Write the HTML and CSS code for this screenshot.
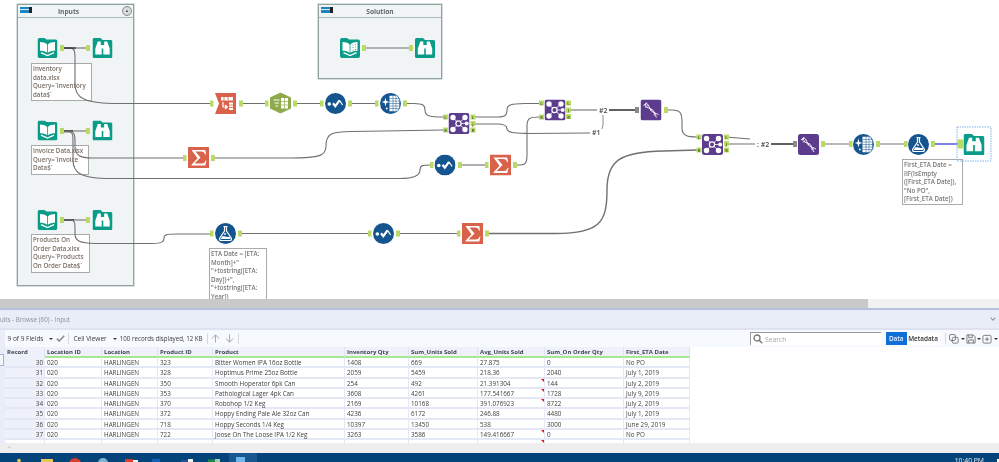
FILE: index.html
```html
<!DOCTYPE html>
<html lang="en">
<head>
<meta charset="utf-8">
<title>Alteryx workflow</title>
<link rel="stylesheet" href="styles.css">
</head>
<body>
<div class="app">
  <section class="canvas">
    <div class="box box-inputs">
      <div class="box-head"><span class="tag"></span><span class="box-title">Inputs</span><span class="collapse">&#9650;</span></div>
    </div>
    <div class="box box-solution">
      <div class="box-head"><span class="tag"></span><span class="box-title">Solution</span></div>
    </div>
    <div class="note-box n1">Inventory<br>data.xlsx<br>Query=`Inventory<br>data$`</div>
    <div class="note-box n2">Invoice Data.xlsx<br>Query=`Invoice<br>Data$`</div>
    <div class="note-box n3">Products On<br>Order Data.xlsx<br>Query=`Products<br>On Order Data$`</div>
    <div class="note-box n4">ETA Date = [ETA:<br>Month]+"<br>"+tostring([ETA:<br>Day])+",<br>"+tostring([ETA:<br>Year])</div>
    <div class="note-box n5">First_ETA Date =<br>IIF(IsEmpty<br>([First_ETA Date]),<br>"No PO",<br>[First_ETA Date])</div>

    <svg class="flow" viewBox="0 0 999 299" width="999" height="299" aria-hidden="true">
      <defs>
        <symbol id="input" viewBox="0 0 20 20">
          <path class="teal" d="M2 0H7L9 1.500H18a2 2 0 0 1 2 2V18a2 2 0 0 1-2 2H2a2 2 0 0 1-2-2V2a2 2 0 0 1 2-2Z"/>
          <path class="wht" d="M2.500 4C5 4 8 4.800 9.600 6.400V14.800C8 13.400 5 12.800 2.500 12.800ZM17.500 4C15 4 12 4.800 10.400 6.400V14.800C12 13.400 15 12.800 17.500 12.800Z"/>
          <path class="tl" d="M3.500 14.600 10 17.600 16.500 14.600"/>
        </symbol>
        <symbol id="input2" viewBox="0 0 20 20">
          <path class="teal" d="M2 0H7L9 1.500H18a2 2 0 0 1 2 2V18a2 2 0 0 1-2 2H2a2 2 0 0 1-2-2V2a2 2 0 0 1 2-2Z"/>
          <path class="wht" d="M2.500 4C5 4 8 4.800 9.600 6.400V14.800C8 13.400 5 12.800 2.500 12.800ZM17.500 4C15 4 12 4.800 10.400 6.400V14.800C12 13.400 15 12.800 17.500 12.800Z"/>
          <path class="tl2" d="M13 6.500V7.500M13 9V10M13 11.500V12.500M15.500 6V7M15.500 8.500V9.500M15.500 11V12"/>
          <path class="tl" d="M3.500 14.600 10 17.600 16.500 14.600"/>
        </symbol>
        <symbol id="browse" viewBox="0 0 20 20">
          <path class="teal" d="M1.500 0H8L10 2H18.500a1.500 1.500 0 0 1 1.500 1.500V18.500a1.500 1.500 0 0 1-1.500 1.500H1.500a1.500 1.500 0 0 1-1.500-1.500V1.500a1.500 1.500 0 0 1 1.500-1.500Z"/>
          <path class="wht" d="M5.300 3.500H8.300V6.500L9.200 9.500V16.500H2.800V10.500ZM14.700 3.500H11.700V6.500L10.800 9.500V16.500H17.200V10.500Z"/>
          <path class="wht" d="M8.300 7H11.700V10.500H8.300Z"/>
        </symbol>
        <symbol id="xtab" viewBox="0 0 21 21">
          <path class="red" d="M0 0H21V21H0L4 10.500Z"/>
          <path class="wht" d="M6 4H18V7.500H6Z"/>
          <path class="rd" d="M9 4V7.500M13 4V7.500"/>
          <path class="wl" d="M8 9V14H12M10 12 12.300 14 10 16"/>
          <path class="wht" d="M14 9.500H18V17H14Z"/>
          <path class="rd" d="M14 12H18M14 14.500H18"/>
        </symbol>
        <symbol id="hex" viewBox="0 0 22 21">
          <path class="olive" d="M11 0 21.500 5V16L11 21 .500 16V5Z"/>
          <path class="wl" d="M4 7.500H10M5 10.500H9.500M6 13.500H8.500"/>
          <path class="wht" d="M11.500 5.500H18.500V16H11.500Z"/>
          <path class="ol" d="M15 5.500V16M11.500 9H18.500M11.500 12.500H18.500"/>
        </symbol>
        <symbol id="select" viewBox="0 0 21 21">
          <circle class="blue" cx="10.500" cy="10.500" r="10.500"/>
          <circle class="wht" cx="4.300" cy="11" r="1.800"/>
          <path class="wl2" d="M8 10.300 10.300 13.200 14.500 7.300"/>
          <path class="wl" d="M14.500 7.300 17.600 12"/>
        </symbol>
        <symbol id="multi" viewBox="0 0 21 21">
          <circle class="blue" cx="10.500" cy="10.500" r="10.500"/>
          <path class="wht" d="M5.500 4.500 6.400 8.100 9.500 9 6.400 9.900 5.500 13.500 4.600 9.900 1.800 9 4.600 8.100Z"/>
          <path class="wht" d="M9.500 2.800H17L19.300 6.500V15L17 18.300H9.500Z"/>
          <path class="bl" d="M13 2.800V18.300M16 2.800V18.300M9.500 5.500H19M9.500 8H19.300M9.500 10.500H19.300M9.500 13H19.300M9.500 15.500H19"/>
          <circle class="wht" cx="6.800" cy="15.500" r=".9"/>
        </symbol>
        <symbol id="formula" viewBox="0 0 21 21">
          <circle class="blue" cx="10.500" cy="10.500" r="10.500"/>
          <path class="wl" d="M8.500 3.500H12.500M9.500 3.500V8L4.800 15C4 16.500 5 17.500 6.300 17.500H14.700C16 17.500 17 16.500 16.200 15L11.500 8V3.500"/>
          <path class="wht" d="M7 13.500C9 12.500 12 15 14.500 13.500L15.500 16H5.800Z"/>
          <circle class="wht" cx="10" cy="11" r=".9"/>
        </symbol>
        <symbol id="sum" viewBox="0 0 21 21">
          <path class="red" d="M0 0H21V21H0Z"/>
          <path class="wht" d="M3.500 3H17.300L18 7.500H17C16.500 5.500 15.500 4.500 13 4.500H7.500L12.500 10.500 6.500 16.500H14C16 16.500 17 15.500 17.600 13.500H18.500L17.300 18.500H3.500V17.800L9.500 11.300Z"/>
        </symbol>
        <symbol id="join" viewBox="0 0 21 21">
          <rect class="purple" width="21" height="21" rx="2.500"/>
          <path class="wt" d="M10 10.500 5 5M10 10.500 16 5M10 10.500 5 16M10 10.500 16 16M10 10.500H18"/>
          <circle class="pc" cx="10" cy="10.500" r="2.600"/>
          <circle class="wht" cx="4.500" cy="4.500" r="2.700"/>
          <circle class="wht" cx="16.500" cy="4.500" r="2.700"/>
          <circle class="wht" cx="4.500" cy="16.500" r="2.700"/>
          <circle class="wht" cx="16.500" cy="16.500" r="2.700"/>
          <circle class="wht" cx="18.200" cy="10.500" r="2"/>
        </symbol>
        <symbol id="dna" viewBox="0 0 21 21">
          <rect class="purple" width="21" height="21" rx="2.500"/>
          <path class="wd" d="M3 6Q7 2 8.500 7T13 13T18 15"/>
          <path class="wd" d="M6 3Q2.500 7 8 8.500T13.500 12.500T16 18"/>
          <path class="wr" d="M4.500 4.500 6 6M10 10 11 11.500M11.500 9.500 10 11M14.500 14.500 16 16M13 15.500 15.500 13.500M5 8.500 7.500 5.500"/>
        </symbol>
      </defs>

      <!-- wires -->
      <path class="wire" d="M64 48H70C75 48 75 52 75 60V84C75 98 85 103 112 103.500H210"/>
      <path class="wire dark" d="M64 48H76"/>
      <path class="wire" d="M76 48H86"/>
      <path class="wire" d="M64 131H86"/>
      <path class="wire dark" d="M64 131H73"/>
      <path class="wire" d="M64 131H70C74 131 75 134 75 140V147C75 155 80 158 92 158H183"/>
      <path class="wire" d="M64 132H69C73 132 73 135 73 142V160C73 172 80 178 105 178.500H400C416 178.500 420 175 420 170C420 165 423 165 430 165"/>
      <path class="wire" d="M64 220H86"/>
      <path class="wire dark" d="M64 220H74"/>
      <path class="wire" d="M64 220H70C75 220 75 223 75 228V234C75 241 80 243 95 243.500H152C163 243.500 164 241 164 238C164 234 168 234 178 234H210"/>
      <path class="wire" d="M243 103.500H265M297 103.500H320M351 103.500H375"/>
      <path class="wire" d="M405 103.500H414C424 103.500 425 106 425 110C425 116 429 117 443 117"/>
      <path class="wire" d="M213 158H290C322 158 326 155 326 146C326 133 332 132 352 131.500L443 130"/>
      <path class="wire" d="M460 165H485"/>
      <path class="wire" d="M515 165H520C527 165 527 160 527 154V126C527 118 530 117 539 117"/>
      <path class="wire" d="M475 117H498C507 117 507 113 507 110C507 104 512 104 526 103.500H539"/>
      <path class="wire" d="M475 124H497C506 124 507 127 507 129C508 133 515 133 528 133.500L590 133"/>
      <path class="wire" d="M240 233.500H368M398 233.500H458"/>
      <path class="wire thick" d="M487 233.500H556C600 233.500 607 222 607 190C607 160 620 152 664 151L697 150"/>
      <path class="wire" d="M570 110H597"/>
      <path class="wire dark thick" d="M609 110H636"/>
      <path class="wire thin" d="M603 115V125L602 129"/>
      <path class="wire" d="M666 110H672C681 110 682 114 682 122V128C682 136 688 137 697 137"/>
      <path class="wire" d="M726 137 750 139M726 144H755"/>
      <path class="wire dark thick" d="M771 144H794"/>
      <path class="wire" d="M823 144H849M878 144H904"/>
      <path class="wire-sel" d="M933 144H958"/>
      <path class="wire" d="M366 48H411"/>
      <path class="wire thin" d="M362 48H366"/>

      <!-- tools -->
      <use href="#input" x="37.500" y="38" width="20" height="20"/>
      <use href="#browse" x="92.500" y="38" width="20" height="20"/>
      <use href="#input" x="37.500" y="120.500" width="20" height="20"/>
      <use href="#browse" x="92.500" y="120.500" width="20" height="20"/>
      <use href="#input" x="37.500" y="210" width="20" height="20"/>
      <use href="#browse" x="92.500" y="210" width="20" height="20"/>
      <use href="#input2" x="340" y="38" width="20" height="20"/>
      <use href="#browse" x="415" y="38" width="20" height="20"/>
      <use href="#xtab" x="215" y="93" width="21" height="21"/>
      <use href="#hex" x="269.500" y="92.500" width="22" height="21"/>
      <use href="#select" x="325" y="93" width="21" height="21"/>
      <use href="#multi" x="380" y="93" width="21" height="21"/>
      <use href="#join" x="448.500" y="113" width="21" height="21"/>
      <use href="#sum" x="188" y="147" width="21" height="21"/>
      <use href="#select" x="434.500" y="154.500" width="21" height="21"/>
      <use href="#sum" x="490" y="154.500" width="21" height="21"/>
      <use href="#formula" x="215" y="223" width="21" height="21"/>
      <use href="#select" x="373" y="223" width="21" height="21"/>
      <use href="#sum" x="462" y="223" width="21" height="21"/>
      <use href="#join" x="544.500" y="99.500" width="21" height="21"/>
      <use href="#dna" x="640.500" y="99.500" width="21" height="21"/>
      <use href="#join" x="702" y="134" width="21" height="21"/>
      <use href="#dna" x="798" y="134" width="21" height="21"/>
      <use href="#multi" x="853" y="134" width="21" height="21"/>
      <use href="#formula" x="908" y="134" width="21" height="21"/>
      <use href="#browse" x="963.500" y="134" width="21" height="21"/>
      <rect class="selbox" x="957" y="127" width="34" height="34"/>

      <!-- anchors -->
      <g class="anchors">
        <rect x="60" y="45" width="4" height="6"/><rect x="86" y="45" width="4" height="6"/>
        <rect x="60" y="128" width="4" height="6"/><rect x="86" y="128" width="4" height="6"/>
        <rect x="60" y="217" width="4" height="6"/><rect x="86" y="217" width="4" height="6"/>
        <rect x="362" y="45" width="4" height="6"/><rect x="409" y="45" width="4" height="6"/>
        <rect x="210" y="100.500" width="3.500" height="6"/><rect x="239" y="100.500" width="4" height="6"/>
        <rect x="265" y="100.500" width="3.500" height="6"/><rect x="293" y="100.500" width="4" height="6"/>
        <rect x="320" y="100.500" width="3.500" height="6"/><rect x="348" y="100.500" width="4" height="6"/>
        <rect x="375" y="100.500" width="3.500" height="6"/><rect x="403" y="100.500" width="4" height="6"/>
        <rect x="183" y="155" width="3.500" height="6"/><rect x="211" y="155" width="4" height="6"/>
        <rect x="430" y="162" width="3.500" height="6"/><rect x="458" y="162" width="4" height="6"/>
        <rect x="485" y="162" width="3.500" height="6"/><rect x="513" y="162" width="4" height="6"/>
        <rect x="210" y="230.500" width="3.500" height="6"/><rect x="238" y="230.500" width="4" height="6"/>
        <rect x="368" y="230.500" width="3.500" height="6"/><rect x="396" y="230.500" width="4" height="6"/>
        <rect x="457" y="230.500" width="3.500" height="6"/><rect x="485" y="230.500" width="4" height="6"/>
        <rect x="443" y="114.500" width="5" height="5"/><rect x="443" y="127.500" width="5" height="5"/>
        <rect x="470.500" y="114.500" width="5" height="5"/><rect x="470.500" y="121" width="5" height="5"/><rect x="470.500" y="127.500" width="5" height="5"/>
        <rect x="539" y="100.500" width="5" height="5"/><rect x="539" y="114.500" width="5" height="5"/>
        <rect x="566" y="100.500" width="5" height="5"/><rect x="566" y="107.500" width="5" height="5"/><rect x="566" y="114" width="5" height="5"/>
        <rect x="696.500" y="134.500" width="5" height="5"/><rect x="696.500" y="147.500" width="5" height="5"/>
        <rect x="724" y="134.500" width="5" height="5"/><rect x="724" y="141" width="5" height="5"/><rect x="724" y="147.500" width="5" height="5"/>
        <rect x="664" y="107" width="4" height="6"/>
        <rect x="821" y="141" width="4" height="6"/>
        <rect x="849" y="141" width="3.500" height="6"/><rect x="876" y="141" width="4" height="6"/>
        <rect x="904" y="141" width="3.500" height="6"/><rect x="931" y="141" width="4" height="6"/>
        <rect x="957.500" y="139.500" width="6" height="9"/>
      </g>
      <rect class="anchor-gray" x="635" y="107" width="4" height="6"/>
      <rect class="anchor-gray" x="793" y="141" width="4" height="6"/>
      <g class="anchor-labels">
        <text x="445.500" y="119">L</text><text x="445.500" y="132">R</text>
        <text x="473" y="119">L</text><text x="473" y="125.500">J</text><text x="473" y="132">R</text>
        <text x="541.500" y="105">L</text><text x="541.500" y="119">R</text>
        <text x="568.500" y="105">L</text><text x="568.500" y="112">J</text><text x="568.500" y="118.500">R</text>
        <text x="699" y="139">L</text><text x="699" y="152">R</text>
        <text x="726.500" y="139">L</text><text x="726.500" y="145.500">J</text><text x="726.500" y="152">R</text>
      </g>
      <g class="wireless">
        <text x="599" y="112.500">#2</text>
        <text x="592" y="135">#1</text>
        <text x="757" y="146.500">: #2</text>
      </g>
    </svg>
  </section>

  <div class="splitter"><span class="split-left"></span><span class="split-right"></span></div>

  <section class="results">
    <header class="results-head"><span>ults - Browse (60) - Input</span><span class="chev"></span></header>
    <div class="results-body">
      <aside class="side"><span class="side-tab"></span></aside>
      <div class="results-main">
        <div class="toolbar">
          <span class="tb-text fields">9 of 9 Fields</span>
          <span class="caret"></span>
          <svg class="tb-check" viewBox="0 0 10 8" width="9" height="7" aria-hidden="true"><path d="M.8 4 3.500 7 9.200 .8"/></svg>
          <span class="tb-sep first"></span>
          <span class="tb-text viewer">Cell Viewer</span>
          <span class="caret"></span>
          <span class="tb-text records">100 records displayed, 12 KB</span>
          <span class="tb-sep"></span>
          <svg class="tb-arrow" viewBox="0 0 10 10" width="9" height="9" aria-hidden="true"><path d="M5 9.500V1M1 5 5 1 9 5"/></svg>
          <svg class="tb-arrow" viewBox="0 0 10 10" width="9" height="9" aria-hidden="true"><path d="M5 .5V9M1 5 5 9 9 5"/></svg>
          <span class="tb-sep"></span>
          <span class="tb-spacer"></span>
          <label class="search">
            <svg viewBox="0 0 10 10" width="10" height="10" aria-hidden="true"><circle cx="4" cy="4" r="3"/><path d="M6.300 6.300 9.300 9.300"/></svg>
            <span>Search</span>
          </label>
          <div class="seg"><span class="seg-on">Data</span><span class="seg-off">Metadata</span></div>
          <span class="tb-sep last"></span>
          <svg class="tb-icon" viewBox="0 0 11 11" aria-hidden="true"><rect x=".6" y=".6" width="6.500" height="6.500" rx="1.500"/><rect x="3.600" y="3.600" width="6.500" height="6.500" rx="1.500"/></svg>
          <span class="caret small"></span>
          <svg class="tb-icon" viewBox="0 0 11 11" aria-hidden="true"><path d="M1 1H8L10 3V10H1ZM3 1V4H7V1M3 10V6.500H8V10"/></svg>
          <span class="caret small"></span>
          <svg class="tb-icon" viewBox="0 0 11 11" aria-hidden="true"><rect x="1" y="1.500" width="9" height="8.500" rx="1.500"/><path d="M5.500 3.500V8M3.200 5.700H7.800"/></svg>
          <span class="caret small"></span>
        </div>
        <div class="grid">
          <div class="th">Record</div><div class="th">Location ID</div><div class="th">Location</div><div class="th">Product ID</div><div class="th">Product</div><div class="th">Inventory Qty</div><div class="th">Sum_Units Sold</div><div class="th">Avg_Units Sold</div><div class="th">Sum_On Order Qty</div><div class="th">First_ETA Date</div>

          <div class="td rec">30</div><div class="td">020</div><div class="td">HARLINGEN</div><div class="td">323</div><div class="td">Bitter Women IPA 16oz Bottle</div><div class="td">1408</div><div class="td">669</div><div class="td">27.875</div><div class="td">0</div><div class="td">No PO</div>
          <div class="td rec">31</div><div class="td">020</div><div class="td">HARLINGEN</div><div class="td">328</div><div class="td">Hoptimus Prime 25oz Bottle</div><div class="td">2059</div><div class="td">5459</div><div class="td">218.36</div><div class="td">2040</div><div class="td">July 1, 2019</div>
          <div class="td rec">32</div><div class="td">020</div><div class="td">HARLINGEN</div><div class="td">350</div><div class="td">Smooth Hoperator 6pk Can</div><div class="td">254</div><div class="td">492</div><div class="td flag">21.391304</div><div class="td">144</div><div class="td">July 2, 2019</div>
          <div class="td rec">33</div><div class="td">020</div><div class="td">HARLINGEN</div><div class="td">353</div><div class="td">Pathological Lager 4pk Can</div><div class="td">3608</div><div class="td">4261</div><div class="td flag">177.541667</div><div class="td">1728</div><div class="td">July 9, 2019</div>
          <div class="td rec">34</div><div class="td">020</div><div class="td">HARLINGEN</div><div class="td">370</div><div class="td">Robohop 1/2 Keg</div><div class="td">2169</div><div class="td">10168</div><div class="td flag">391.076923</div><div class="td">8722</div><div class="td">July 2, 2019</div>
          <div class="td rec">35</div><div class="td">020</div><div class="td">HARLINGEN</div><div class="td">372</div><div class="td">Hoppy Ending Pale Ale 32oz Can</div><div class="td">4236</div><div class="td">6172</div><div class="td">246.88</div><div class="td">4480</div><div class="td">July 1, 2019</div>
          <div class="td rec">36</div><div class="td">020</div><div class="td">HARLINGEN</div><div class="td">718</div><div class="td">Hoppy Seconds 1/4 Keg</div><div class="td">10397</div><div class="td">13450</div><div class="td">538</div><div class="td">3000</div><div class="td">June 29, 2019</div>
          <div class="td rec">37</div><div class="td">020</div><div class="td">HARLINGEN</div><div class="td">722</div><div class="td">Joose On The Loose IPA 1/2 Keg</div><div class="td">3263</div><div class="td">3586</div><div class="td flag">149.416667</div><div class="td">0</div><div class="td">No PO</div>
          <div class="td"></div><div class="td"></div><div class="td"></div><div class="td"></div><div class="td"></div><div class="td"></div><div class="td"></div><div class="td flag"></div><div class="td"></div><div class="td"></div>
        </div>
      </div>
    </div>
    <div class="hscroll"><span>&lt;</span></div>
  </section>

  <footer class="taskbar">
    <svg class="task-icons" viewBox="0 0 262 9" width="262" height="9" aria-hidden="true">
      <rect class="t-active" x="229" y="0" width="28" height="9"/>
      <circle class="t-y" cx="19" cy="7.500" r="1.800"/>
      <rect class="t-y2" x="41" y="6" width="12" height="3"/>
      <circle class="t-r" cx="75" cy="11" r="6"/>
      <circle class="t-s" cx="103" cy="10" r="5"/>
      <rect class="t-r" x="125" y="6" width="8" height="3"/><rect class="t-w" x="133" y="7" width="5" height="2"/>
      <rect class="t-b" x="152" y="6" width="8" height="3"/>
      <rect class="t-n" x="181" y="7" width="7" height="2"/><rect class="t-w" x="188" y="6" width="5" height="3"/>
      <rect class="t-g" x="208" y="6.500" width="7" height="2.500"/><rect class="t-g2" x="215" y="6" width="5" height="3"/>
      <rect class="t-l" x="236" y="4" width="9" height="5"/>
    </svg>
    <span class="clock">10:40 PM</span>
    <span class="desk"></span>
  </footer>
</div>
</body>
</html>
```

FILE: styles.css
```css
* { box-sizing: border-box; }
html, body { margin: 0; padding: 0; background: #fff; }
body { width: 999px; height: 462px; overflow: hidden; font-family: "Open Sans", "Liberation Sans", sans-serif; color: #444; }
.app { width: 999px; height: 462px; display: flex; flex-direction: column; overflow: hidden; filter: blur(.45px); }

/* canvas: free positioning of workflow items */
.canvas { position: relative; flex: 0 0 299px; height: 299px; overflow: hidden; background: #fff; }
.box { position: absolute; background: #f0f4f5; border: 1px solid #8fa3a3; box-shadow: 0 0 0 .5px #b0bebe; }
.box-inputs { left: 17px; top: 4px; width: 117px; height: 282px; }
.box-solution { left: 318px; top: 4px; width: 124px; height: 75px; }
.box-head { position: relative; height: 13px; border-bottom: 1px solid #a9b8b8; display: flex; align-items: center; justify-content: center; }
.box-title { font-size: 6.6px; font-weight: 700; color: #606a6a; }
.box-inputs .box-title { margin-right: 14px; }
.tag { position: absolute; left: 2px; top: 2px; width: 12px; height: 6px; background: linear-gradient(#1b85c4 0 2.500px, #d8ecf8 2.500px 3.500px, #1b85c4 3.500px) left / 9px 6px no-repeat, #222; }
.collapse { position: absolute; right: 1px; top: 1px; width: 10px; height: 10px; border: 1px solid #8a8a8a; border-radius: 50%; background: #d6dcdc; font-size: 4px; line-height: 8px; text-align: center; color: #444; }

.note-box { position: absolute; background: #fff; border: 1px solid #aaa; padding: 1px 0 0 1px; font-size: 6.2px; line-height: 8.6px; font-weight: 600; color: #7a6f66; white-space: nowrap; overflow: hidden; }
.n1 { left: 31px; top: 63px; width: 61px; height: 38px; }
.n2 { left: 31px; top: 145px; width: 58px; height: 30px; }
.n3 { left: 31px; top: 234px; width: 59px; height: 39px; }
.n4 { left: 209px; top: 248px; width: 58px; height: 60px; color: #777; }
.n5 { left: 902px; top: 159px; width: 61px; height: 46px; color: #777; }

.flow { position: absolute; left: 0; top: 0; display: block; }
.teal { fill: #0a9c88; }
.red { fill: #d9624b; }
.olive { fill: #8fa94d; }
.blue { fill: #14558f; }
.purple { fill: #5d3c8e; }
.wht { fill: #fff; }
.tl { fill: none; stroke: #fff; stroke-width: 1.4; }
.tl2 { fill: none; stroke: #0a9c88; stroke-width: .8; }
.rd { fill: none; stroke: #d9624b; stroke-width: .8; }
.ol { fill: none; stroke: #8fa94d; stroke-width: .7; }
.bl { fill: none; stroke: #14558f; stroke-width: .5; }
.wl { fill: none; stroke: #fff; stroke-width: 1.2; }
.wt { fill: none; stroke: #fff; stroke-width: .8; }
.wd { fill: none; stroke: #fff; stroke-width: .9; }
.wr { fill: none; stroke: #fff; stroke-width: .6; }
.wl2 { fill: none; stroke: #fff; stroke-width: 2.2; }
.pc { fill: #5d3c8e; stroke: #fff; stroke-width: 1.2; }
.wire { fill: none; stroke: #707070; stroke-width: 1.1; }
.wire.thick { stroke-width: 1.4; }
.wire.thin { stroke-width: .8; }
.wire.dark { stroke: #2c2c2c; stroke-width: 1.5; }
.wire-sel { fill: none; stroke: #2b2fd8; stroke-width: 1.2; }
.selbox { fill: none; stroke: #7fb4ea; stroke-width: 1; stroke-dasharray: 1.500 1; }
.anchors rect { fill: #b9d968; }
.anchor-gray { fill: #8a8a8a; }
.anchor-labels text { font-family: "Open Sans", sans-serif; font-size: 4px; font-weight: 700; fill: #4a6a20; text-anchor: middle; }
.wireless text { font-family: "Open Sans", sans-serif; font-size: 7px; font-weight: 600; fill: #444; }

/* splitter */
.splitter { flex: 0 0 9px; display: flex; }
.split-left { flex: 0 0 868px; background: #c9c9c9; }
.split-right { flex: 1; background: #f1f1f1; }

/* results */
.results { flex: 1 1 auto; display: flex; flex-direction: column; min-height: 0; background: #e9edf7; border-top: 2px solid #b6c2dc; }
.results-head { flex: 0 0 20px; display: flex; align-items: center; justify-content: space-between; padding-right: 2px; font-size: 6.2px; color: #8b8f96; background: #e9edf8; border-bottom: 2px solid #dde2ee; }
.chev { width: 4px; height: 4px; border-right: 1px solid #8a90a0; border-bottom: 1px solid #8a90a0; transform: rotate(45deg); margin: -2px 2px 0 0; }
.results-body { flex: 0 0 113px; display: flex; min-height: 0; }
.side { flex: 0 0 5px; background: #e9edf7; position: relative; }
.side-tab { display: block; margin-top: 24px; width: 4px; height: 12px; background: #f4f6fb; border: 1px solid #9db7dc; border-left: 0; }
.results-main { flex: 1; min-width: 0; display: flex; flex-direction: column; background: #fff; }
.toolbar { flex: 0 0 17px; display: flex; align-items: center; background: #f6f9fe; padding: 0 .5px 0 2.500px; }
.tb-text { font-size: 6.500px; color: #3c3c3c; white-space: nowrap; }
.caret { width: 0; height: 0; border-left: 2px solid transparent; border-right: 2px solid transparent; border-top: 2px solid #333; margin-left: 6px; flex: none; }
.caret.small { margin-left: 1.500px; margin-right: 1px; }
.tb-check { margin-left: 3px; fill: none; stroke: #8f8f8f; stroke-width: 1.800; flex: none; }
.tb-sep { width: 1px; height: 11px; background: #d4d8e0; margin-left: 4px; flex: none; }
.tb-sep.first { margin-left: 3px; }
.tb-sep.last { margin-left: 5.500px; margin-right: 3px; }
.viewer { margin-left: 4px; }
.records { margin-left: 3px; font-size: 6.200px; }
.tb-arrow { margin-left: 3px; fill: none; stroke: #9aa0aa; stroke-width: 1; flex: none; }
.tb-arrow + .tb-arrow { margin-left: 5px; }
.tb-spacer { flex: 1; }
.search { width: 131px; height: 13px; display: flex; align-items: center; gap: 2px; background: #fff; border-top: 1px solid #999; border-left: 1px solid #999; padding-left: 2px; font-size: 6.800px; color: #a8a8a8; flex: none; }
.search svg { fill: none; stroke: #777; stroke-width: 1.300; }
.seg { display: flex; height: 13px; margin-left: 5px; font-size: 6.400px; font-weight: 600; line-height: 13px; flex: none; }
.seg-on { width: 20.500px; background: #0f6fd6; color: #e8f1ff; text-align: center; }
.seg-off { width: 33px; background: #fff; color: #333; text-align: center; }
.tb-icon { width: 10px; height: 10px; fill: none; stroke: #666; stroke-width: .9; flex: none; }

.grid { flex: 1; min-height: 0; overflow: hidden; display: grid; align-content: start; justify-content: start; grid-template-columns: 40px 57px 56px 55px 132px 64px 69px 67px 79px 66px; grid-template-rows: 11px; grid-auto-rows: 10.3px; }
.th { height: 11px; padding-left: 2px; font-size: 6px; font-weight: 700; line-height: 11px; color: #3f4650; background: #eef1f9; border-right: 1px solid #dfe4f1; border-bottom: 2px solid #a6e88f; white-space: nowrap; }
.th:first-child { border-bottom-color: #eef1f9; }
.td { position: relative; height: 10.3px; padding-left: 2px; font-size: 6.300px; line-height: 10.300px; color: #404040; background: #fff; border-right: 1px solid #e4e8f5; border-bottom: 2px solid #e4e8f5; white-space: nowrap; }
.rec { background: #eef1f9; text-align: right; padding: 0 1px 0 0; }
.flag::after { content: ""; position: absolute; right: 0; top: 0; border-top: 3px solid #e2141c; border-left: 3px solid transparent; }

.hscroll { flex: 0 0 10px; background: #eeeeee; font-size: 6px; line-height: 9px; color: #aaa; padding-left: 8px; }

/* taskbar */
.taskbar { flex: 0 0 9px; height: 9px; display: flex; align-items: flex-start; background: #03457b; overflow: hidden; }
.task-icons { flex: none; display: block; }
.t-active { fill: #16588f; }
.t-y { fill: #e9c646; }
.t-y2 { fill: #e6c75e; }
.t-r { fill: #d8402f; }
.t-s { fill: #7fb2cf; }
.t-w { fill: #f2f2f2; }
.t-b { fill: #0f64b4; }
.t-n { fill: #254f9c; }
.t-g { fill: #1c8a46; }
.t-g2 { fill: #a8c8b0; }
.t-l { fill: #6fb6ee; }
.clock { margin-left: auto; margin-right: 13px; font-size: 6.800px; line-height: 9px; padding-top: 3px; color: #e8eef5; white-space: nowrap; }
.desk { width: 2px; height: 3px; margin-top: 6px; background: #fff; }
```
